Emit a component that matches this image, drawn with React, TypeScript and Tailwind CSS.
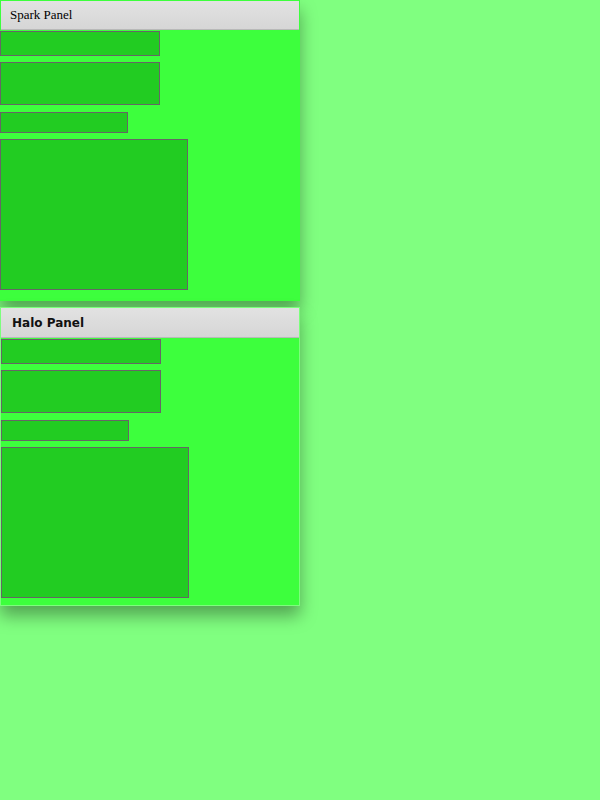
import React from "react";

function Box({ w, h, mt }: { w: string; h: string; mt: string }) {
  return <div className={`${w} ${h} ${mt} border border-[#666] bg-[#22cc22]`} />;
}

export default function App() {
  return (
    <div className="min-h-screen w-full bg-[#80ff80]">
      {/* Spark panel */}
      <div className="flex w-[300px] flex-col bg-[#3dff3d] pb-[11px] shadow-[0_10px_16px_rgba(0,0,0,0.35)]">
        <div className="mx-px mt-px flex h-[29px] items-center border-b border-[#b8b8b8] bg-gradient-to-b from-[#e2e2e2] to-[#d6d6d6] pl-[9px] text-[13px] text-black [font-family:'Liberation_Serif',serif]">
          Spark Panel
        </div>
        <Box w="w-[160px]" h="h-[25px]" mt="mt-px" />
        <Box w="w-[160px]" h="h-[43px]" mt="mt-[6px]" />
        <Box w="w-[128px]" h="h-[21px]" mt="mt-[7px]" />
        <Box w="w-[188px]" h="h-[151px]" mt="mt-[6px]" />
      </div>

      {/* Halo panel */}
      <div className="mt-[6px] flex w-[300px] flex-col border border-[#7cff7c] bg-[#3dff3d] pb-[7px] shadow-[0_10px_16px_rgba(0,0,0,0.35)]">
        <div className="flex h-[30px] items-center border-b border-[#b8b8b8] bg-gradient-to-b from-[#e2e2e2] to-[#d6d6d6] pl-[11px] text-[12px] font-bold text-[#111] [font-family:'DejaVu_Sans',sans-serif]">
          Halo Panel
        </div>
        <Box w="w-[160px]" h="h-[25px]" mt="mt-px" />
        <Box w="w-[160px]" h="h-[43px]" mt="mt-[6px]" />
        <Box w="w-[128px]" h="h-[21px]" mt="mt-[7px]" />
        <Box w="w-[188px]" h="h-[151px]" mt="mt-[6px]" />
      </div>
    </div>
  );
}
